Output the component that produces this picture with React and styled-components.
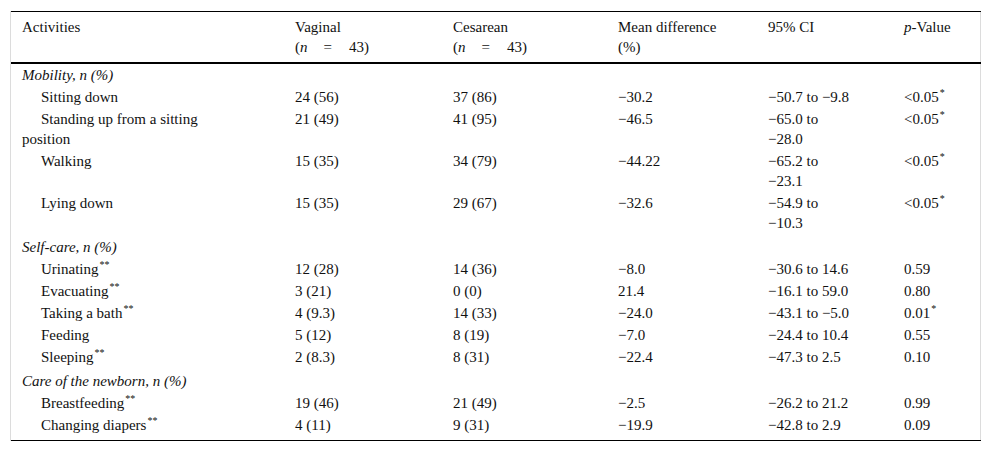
import React from "react";
import styled, { createGlobalStyle } from "styled-components";

const Global = createGlobalStyle`
  html, body { margin: 0; padding: 0; background: #fff; }
  body { font-family: "Liberation Serif", "Times New Roman", serif; color: #111; }
`;

const Frame = styled.div`
  margin: 11px 0 0 10px;
  width: 971px;
  box-sizing: border-box;
  border-left: 1px solid #dcdcdc;
  border-right: 1px solid #dcdcdc;
`;

const Table = styled.table`
  width: 100%;
  table-layout: fixed;
  border-collapse: separate;
  border-spacing: 0;
  font-family: "Liberation Serif", "Times New Roman", serif;
  font-size: 15px;
  line-height: 20px;
  color: #111;

  th, td {
    font-family: "Liberation Serif", "Times New Roman", serif;
    font-size: 15px;
    line-height: 20px;
    box-sizing: border-box;
  }
`;

const HeadCell = styled.th`
  width: ${(p) => p.$w}px;
  text-align: left;
  font-weight: normal;
  vertical-align: top;
  padding: 5px 11px 5px;
  border-top: 1px solid #000;
  border-bottom: 2px solid #000;
`;

const Cell = styled.td`
  vertical-align: top;
  padding: ${(p) => (p.$last ? "1px 11px 5px" : "1px 11px")};
  border-bottom: ${(p) => (p.$last ? "1px solid #000" : "none")};
  white-space: nowrap;
`;

const LabelCell = styled(Cell)`
  text-indent: 19px;
  white-space: normal;
`;

const SectionCell = styled.td`
  font-style: italic;
  padding: ${(p) => (p.$first ? "1px" : "3px")} 11px 1px;
`;

const Sup = styled.sup`
  font-size: 10px;
  line-height: 0;
  vertical-align: 6px;
  margin-left: 1px;
`;

const Eq = styled.span`
  padding: 0 17px 0 16px;
`;

const NHead = ({ n }) => (
  <>
    (<i>n</i>
    <Eq>=</Eq>
    {n})
  </>
);

const sections = [
  {
    title: "Mobility, n (%)",
    rows: [
      ["Sitting down", "", "24 (56)", "37 (86)", "−30.2", ["−50.7 to −9.8"], "<0.05", "*"],
      [["Standing up from a sitting", "position"], "", "21 (49)", "41 (95)", "−46.5", ["−65.0 to", "−28.0"], "<0.05", "*"],
      ["Walking", "", "15 (35)", "34 (79)", "−44.22", ["−65.2 to", "−23.1"], "<0.05", "*"],
      ["Lying down", "", "15 (35)", "29 (67)", "−32.6", ["−54.9 to", "−10.3"], "<0.05", "*"],
    ],
  },
  {
    title: "Self-care, n (%)",
    rows: [
      ["Urinating", "**", "12 (28)", "14 (36)", "−8.0", ["−30.6 to 14.6"], "0.59", ""],
      ["Evacuating", "**", "3 (21)", "0 (0)", "21.4", ["−16.1 to 59.0"], "0.80", ""],
      ["Taking a bath", "**", "4 (9.3)", "14 (33)", "−24.0", ["−43.1 to −5.0"], "0.01", "*"],
      ["Feeding", "", "5 (12)", "8 (19)", "−7.0", ["−24.4 to 10.4"], "0.55", ""],
      ["Sleeping", "**", "2 (8.3)", "8 (31)", "−22.4", ["−47.3 to 2.5"], "0.10", ""],
    ],
  },
  {
    title: "Care of the newborn, n (%)",
    rows: [
      ["Breastfeeding", "**", "19 (46)", "21 (49)", "−2.5", ["−26.2 to 21.2"], "0.99", ""],
      ["Changing diapers", "**", "4 (11)", "9 (31)", "−19.9", ["−42.8 to 2.9"], "0.09", ""],
    ],
  },
];

const Lines = ({ parts }) =>
  parts.map((p, i) => (
    <React.Fragment key={i}>
      {i > 0 && <br />}
      {p}
    </React.Fragment>
  ));

export default function App() {
  return (
    <>
      <Global />
      <Frame>
        <Table>
          <thead>
            <tr>
              <HeadCell $w={273}>Activities</HeadCell>
              <HeadCell $w={158}>
                Vaginal
                <br />
                <NHead n="43" />
              </HeadCell>
              <HeadCell $w={165}>
                Cesarean
                <br />
                <NHead n="43" />
              </HeadCell>
              <HeadCell $w={150}>
                Mean difference
                <br />
                (%)
              </HeadCell>
              <HeadCell $w={136}>95% CI</HeadCell>
              <HeadCell $w={88}>
                <i>p</i>-Value
              </HeadCell>
            </tr>
          </thead>
          <tbody>
            {sections.map((s, si) => (
              <React.Fragment key={s.title}>
                <tr>
                  <SectionCell colSpan={6} $first={si === 0}>
                    {s.title}
                  </SectionCell>
                </tr>
                {s.rows.map((r, ri) => {
                  const last = si === sections.length - 1 && ri === s.rows.length - 1;
                  const label = Array.isArray(r[0]) ? r[0] : [r[0]];
                  return (
                    <tr key={ri}>
                      <LabelCell $last={last}>
                        <Lines parts={label} />
                        {r[1] && <Sup>{r[1]}</Sup>}
                      </LabelCell>
                      <Cell $last={last}>{r[2]}</Cell>
                      <Cell $last={last}>{r[3]}</Cell>
                      <Cell $last={last}>{r[4]}</Cell>
                      <Cell $last={last}>
                        <Lines parts={r[5]} />
                      </Cell>
                      <Cell $last={last}>
                        {r[6]}
                        {r[7] && <Sup>{r[7]}</Sup>}
                      </Cell>
                    </tr>
                  );
                })}
              </React.Fragment>
            ))}
          </tbody>
        </Table>
      </Frame>
    </>
  );
}
